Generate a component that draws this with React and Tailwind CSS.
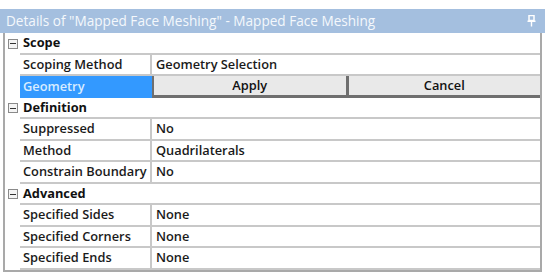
import React from "react";

const font = { fontFamily: '"Open Sans", "Liberation Sans", sans-serif' };

function Minus() {
  return (
    <div className="w-[10px] h-[10px] border border-[#8a8a8a] bg-[#f4f4f4] flex items-center justify-center">
      <div className="w-[6px] h-[1px] bg-[#333]" />
    </div>
  );
}

function Header({ label }) {
  return (
    <div className="flex h-[21.5px]">
      <div className="w-[15px] flex items-center justify-center shrink-0">
        <Minus />
      </div>
      <div className="flex-1 flex items-center pl-[3px] border-b-2 border-[#c8c8c8] font-bold text-[#111]">
        {label}
      </div>
    </div>
  );
}

function Row({ label, value }) {
  return (
    <div className="flex h-[21.5px]">
      <div className="w-[15px] shrink-0" />
      <div className="w-[132px] shrink-0 flex items-center pl-[3px] border-b-2 border-r-2 border-[#c8c8c8] font-semibold text-[#1a1a1a]">
        {label}
      </div>
      <div className="flex-1 flex items-center pl-[4px] border-b-2 border-[#c8c8c8] font-semibold text-[#1a1a1a]">
        {value}
      </div>
    </div>
  );
}

function Pin() {
  return (
    <svg width="9" height="12" viewBox="0 0 9 12">
      <rect x="2" y="0.5" width="5" height="5" fill="none" stroke="#ffffff" strokeWidth="1.5" />
      <rect x="0.5" y="5.5" width="8" height="1.5" fill="#ffffff" />
      <rect x="3.8" y="7" width="1.4" height="4.5" fill="#ffffff" />
    </svg>
  );
}

export default function App() {
  return (
    <div className="w-[548px] h-[274px] bg-white overflow-hidden text-[12.8px] leading-none" style={font}>
      <div className="h-[9px]" />
      <div className="w-[545px] h-[24px] bg-[#a4bfdf] flex items-center justify-between pl-[6px] pr-[9px] text-[#f4f8fc] text-[13.6px]">
        <span>Details of "Mapped Face Meshing" - Mapped Face Meshing</span>
        <Pin />
      </div>
      <div className="flex">
        <div className="w-[3px]" />
        <div className="w-[539px] border-l-2 border-r-2 border-b-2 border-[#a9a9a9] flex flex-col">
          <Header label="Scope" />
          <Row label="Scoping Method" value="Geometry Selection" />
          <div className="flex h-[21.5px]">
            <div className="w-[15px] shrink-0" />
            <div className="w-[132px] shrink-0 flex items-center pl-[3px] bg-[#3399ff] text-[#d8ecff] font-semibold">
              Geometry
            </div>
            <div className="flex-1 flex">
              <button className="flex-1 bg-[#e9e9e9] border-l-2 border-b-[3px] border-r border-[#6f6f6f] font-semibold text-[#111]" style={font}>
                Apply
              </button>
              <button className="flex-1 bg-[#e9e9e9] border-l-2 border-b-[3px] border-[#6f6f6f] font-semibold text-[#111]" style={font}>
                Cancel
              </button>
            </div>
          </div>
          <Header label="Definition" />
          <Row label="Suppressed" value="No" />
          <Row label="Method" value="Quadrilaterals" />
          <Row label="Constrain Boundary" value="No" />
          <Header label="Advanced" />
          <Row label="Specified Sides" value="None" />
          <Row label="Specified Corners" value="None" />
          <Row label="Specified Ends" value="None" />
        </div>
      </div>
    </div>
  );
}
